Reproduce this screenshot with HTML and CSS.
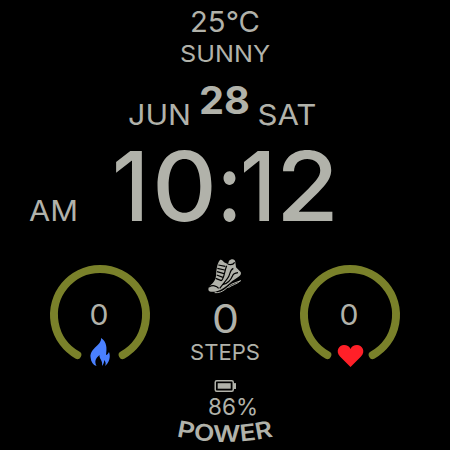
FILE: index.html
```
<!DOCTYPE html>
<html lang="en">
<head>
<meta charset="utf-8">
<title>Watch face</title>
<link rel="stylesheet" href="styles.css">
</head>
<body>
<main class="face">
  <section class="weather">
    <svg class="label" width="68" height="21"><text x="-1" y="21" font-size="29" textLength="70" lengthAdjust="spacingAndGlyphs">25°C</text></svg>
    <svg class="label" width="88" height="17"><text x="-1" y="17.500" font-size="23" textLength="90" lengthAdjust="spacingAndGlyphs">SUNNY</text></svg>
  </section>
  <section class="date">
    <svg class="label" width="61" height="21"><text x="-1" y="21.500" font-size="29" textLength="63" lengthAdjust="spacingAndGlyphs">JUN</text></svg>
    <svg class="label day" width="49" height="28"><text x="-1" y="28" font-size="38" textLength="51" lengthAdjust="spacingAndGlyphs">28</text></svg>
    <svg class="label" width="57" height="21"><text x="-1.500" y="21.500" font-size="29" textLength="59" lengthAdjust="spacingAndGlyphs">SAT</text></svg>
  </section>
  <section class="clock">
    <svg class="label" width="47" height="21"><text x="-1" y="21" font-size="29" textLength="49" lengthAdjust="spacingAndGlyphs">AM</text></svg>
    <svg class="label time" width="218" height="70"><text y="70" font-size="96"><tspan x="-3" textLength="37" lengthAdjust="spacingAndGlyphs">1</tspan><tspan x="37" textLength="65" lengthAdjust="spacingAndGlyphs">0</tspan><tspan x="102" textLength="25" lengthAdjust="spacingAndGlyphs">:</tspan><tspan x="125" textLength="36" lengthAdjust="spacingAndGlyphs">1</tspan><tspan x="161" textLength="63" lengthAdjust="spacingAndGlyphs">2</tspan></text></svg>
  </section>
  <section class="stats">
    <svg class="gauge" width="100" height="105" viewBox="0 0 100 105">
      <path class="ring" d="M27.300 90 A46 46 0 1 1 72.700 90"/>
      <text x="39.500" y="60" font-size="29" textLength="19" lengthAdjust="spacingAndGlyphs">0</text>
      <path class="flame" d="M51 73C52 80 40 83 40.500 92C41 97 43 100 46.500 101C44 96 46 93 49.500 90C49 94 53 95 52 101C53.500 99 54.500 97 54 95C56 97 56 99 55 101C59 98 61 92 59 87C58 89 57 90 56 90C57 83 57 77 51 73Z"/>
    </svg>
    <div class="steps">
      <svg class="shoe" width="36" height="38" viewBox="6 0 108 114">
        <path class="body" d="M45 12C49 10 53 13 57 19L68 24C72 20 70 12 77 11C85 8 90 12 91 18L93 34L107 48C111 57 101 63 92 68C77 77 68 88 57 95C43 106 23 110 13 106C8 102 10 93 17 87C27 79 32 71 33 60C34 47 35 23 45 12Z"/>
        <path class="lace" d="M40 27L61 31M37 37L59 42M36 47L57 53M35 57L54 64M32 67L49 74M12 93C22 86 35 89 41 97M49 74C58 67 58 46 65 29M68 24C76 27 85 25 89 19M85 37C72 43 77 57 67 68L53 86C67 84 78 71 82 61C84 54 91 51 99 50M44 97L53 86"/>
        <path class="sole" d="M29 110C56 112 67 91 81 84L107 74C95 85 82 86 70 95"/>
      </svg>
      <svg class="label count" width="23" height="29"><text x="-2" y="28.500" font-size="39" textLength="27" lengthAdjust="spacingAndGlyphs">0</text></svg>
      <svg class="label" width="69" height="16"><text x="-1" y="16" font-size="22" textLength="70" lengthAdjust="spacingAndGlyphs">STEPS</text></svg>
    </div>
    <svg class="gauge" width="100" height="105" viewBox="0 0 100 105">
      <path class="ring" d="M27.300 90 A46 46 0 1 1 72.700 90"/>
      <text x="39.500" y="60" font-size="29" textLength="19" lengthAdjust="spacingAndGlyphs">0</text>
      <path class="heart" d="M50.500 102L40 91.500C35 86 39 80 44 80C47 80 49.500 81.500 50.500 84C51.500 81.500 54 80 57 80C62 80 66 86 61 91.500Z"/>
    </svg>
  </section>
  <section class="power">
    <svg class="battery" width="22" height="12" viewBox="0 0 22 12"><rect class="case" x="1.250" y=".75" width="18" height="10.500" rx="1.500"/><rect class="fill" x="3.700" y="3.200" width="13" height="5.500"/><rect class="fill" x="20" y="3" width="2" height="6" rx=".5"/></svg>
    <svg class="label percent" width="49" height="17"><text x="-1" y="17" font-size="23" textLength="50" lengthAdjust="spacingAndGlyphs">86%</text></svg>
    <svg class="label arc" width="100" height="24" viewBox="0 0 100 24"><path id="bow" fill="none" d="M1.400 12.300A216 216 0 0 0 98.600 12.300"/><text font-size="23"><textPath href="#bow" textLength="98" lengthAdjust="spacingAndGlyphs">POWER</textPath></text></svg>
  </section>
</main>
</body>
</html>
```
FILE: styles.css
```
body { margin: 0; background: #000; }
svg { display: block; overflow: visible; flex: none; }
text { fill: #b1b2aa; }
.face {
  box-sizing: border-box;
  width: 450px;
  height: 450px;
  padding-top: 11px;
  overflow: hidden;
  background: #000;
  font-family: Inter, "Open Sans", sans-serif;
  font-weight: 400;
}
.weather { display: flex; flex-direction: column; align-items: center; gap: 12px; }
.date { display: flex; justify-content: center; align-items: flex-end; margin: 25px 6px 0 0; gap: 10px; }
.day { margin-bottom: 10px; font-weight: 700; }
.clock { display: flex; align-items: flex-end; gap: 38px; margin-top: 27px; padding-left: 30px; }
.time { font-weight: 450; }
.stats { display: flex; justify-content: space-between; margin-top: 44px; padding: 0 50px; }
.steps { display: flex; flex-direction: column; align-items: center; margin-top: -9px; }
.count { margin: 10px 0 11px; }
.ring { fill: none; stroke: #7a812a; stroke-width: 8; stroke-linecap: round; }
.flame { fill: #4a80ff; }
.heart { fill: #ff2028; }
.body, .fill { fill: #b1b2aa; }
.lace { fill: none; stroke: #000; stroke-width: 3.6; }
.sole { fill: none; stroke: #b1b2aa; stroke-width: 3; }
.case { fill: none; stroke: #b1b2aa; stroke-width: 1.5; }
.power { display: flex; flex-direction: column; align-items: center; margin-top: 10px; }
.percent { margin: 6px 0 9px 16px; }
.arc { font-weight: 600; }
```
